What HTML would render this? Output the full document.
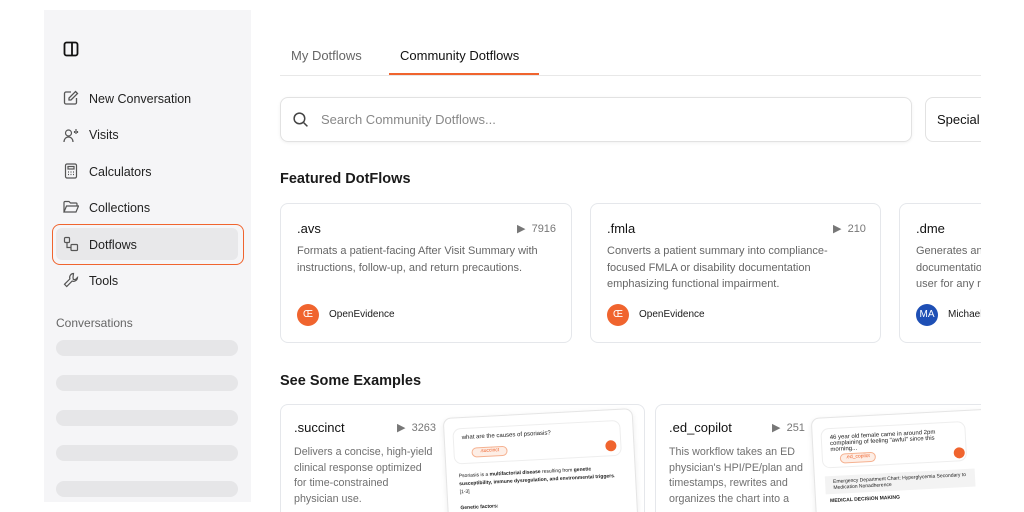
<!DOCTYPE html>
<html><head><style>
*{box-sizing:border-box;margin:0;padding:0}
body{width:1024px;height:512px;overflow:hidden;background:#fff;font-family:"Liberation Sans",sans-serif;position:relative;color:#1a1a1a}
.abs{position:absolute}
#sb{left:44px;top:10px;width:207px;height:492px;background:#f5f5f7}
.it{position:absolute;left:89px;font-size:12.5px;color:#222;line-height:14px}
.ic{position:absolute;left:63px;width:16px;height:16px}
.sk{position:absolute;left:56px;width:182px;height:16px;border-radius:8px;background:#e6e6e8}
.card{position:absolute;border:1px solid #e5e7eb;border-radius:8px;background:#fff;overflow:hidden}
.t{position:absolute;font-size:13px;color:#111}
.d{position:absolute;font-size:11px;color:#666;line-height:16.5px}
.cnt{position:absolute;font-size:11px;color:#777}
.av{position:absolute;width:22px;height:22px;border-radius:50%;background:#f0642e;color:#fff;font-size:10px;text-align:center;line-height:22px}
#clip{position:absolute;left:0;top:0;width:981px;height:512px;overflow:hidden}
</style></head><body>
<div id="sb" class="abs"></div>
<svg class="abs" style="left:63px;top:41px" width="16" height="16" viewBox="0 0 16 16" fill="none" stroke="#111" stroke-width="1.8"><rect x="1.5" y="1.5" width="13" height="13" rx="2"/><line x1="9" y1="2" x2="9" y2="14"/></svg>
<svg class="ic" style="top:90px" viewBox="0 0 16 16" fill="none" stroke="#555" stroke-width="1.3"><path d="M8 2H3a1.5 1.5 0 0 0-1.5 1.5v9A1.5 1.5 0 0 0 3 14h9a1.5 1.5 0 0 0 1.5-1.5V8"/><path d="M12.5 1.5l2 2L8 10H6V8z"/></svg>
<div class="it" style="top:92px">New Conversation</div>
<svg class="ic" style="top:127px" viewBox="0 0 16 16" fill="none" stroke="#555" stroke-width="1.2"><circle cx="5.5" cy="6" r="3"/><path d="M1 15c0-3 2-5 4.5-5s4.5 2 4.5 5"/><path d="M13 2v5M11.5 4v2M14.5 4v2"/></svg>
<div class="it" style="top:128px">Visits</div>
<svg class="ic" style="top:163px" viewBox="0 0 16 16" fill="none" stroke="#555" stroke-width="1.2"><rect x="2.5" y="1" width="11" height="14" rx="1.5"/><rect x="5" y="3.5" width="6" height="2.5"/><path d="M5 9h1M7.5 9h1M10 9h1M5 11.5h1M7.5 11.5h1M10 11.5h1"/></svg>
<div class="it" style="top:165px">Calculators</div>
<svg class="ic" style="top:199px" viewBox="0 0 16 16" fill="none" stroke="#555" stroke-width="1.2"><path d="M1 13V3.5A1 1 0 0 1 2 2.5h4l1.5 1.5H13a1 1 0 0 1 1 1V7"/><path d="M1 13l2.5-6h12L13 13z"/></svg>
<div class="it" style="top:201px">Collections</div>
<div class="abs" style="left:52px;top:224px;width:192px;height:41px;border:1.5px solid #f0642e;border-radius:8px"></div>
<div class="abs" style="left:56px;top:228px;width:182px;height:32px;background:#e8e8ea;border-radius:6px"></div>
<svg class="ic" style="top:236px" viewBox="0 0 16 16" fill="none" stroke="#555" stroke-width="1.2"><rect x="1.5" y="1.5" width="5" height="5" rx="1"/><rect x="8" y="8.5" width="6.5" height="6" rx="1"/><path d="M4 6.5V11.5H8"/></svg>
<div class="it" style="top:238px">Dotflows</div>
<svg class="ic" style="top:272px" viewBox="0 0 16 16" fill="none" stroke="#555" stroke-width="1.2"><path d="M10.5 1.5a4 4 0 0 0-3.6 5.4L1.5 12.3l2.2 2.2 5.4-5.4a4 4 0 0 0 5.4-3.6l-2.2 2.2-2-.3-.3-2z"/></svg>
<div class="it" style="top:274px">Tools</div>
<div class="abs" style="left:56px;top:316px;font-size:12px;color:#666">Conversations</div>
<div class="sk" style="top:340px"></div><div class="sk" style="top:375px"></div><div class="sk" style="top:410px"></div><div class="sk" style="top:445px"></div><div class="sk" style="top:481px"></div>

<div id="clip">
<div class="abs" style="left:291px;top:48px;font-size:13px;color:#666">My Dotflows</div>
<div class="abs" style="left:400px;top:48px;font-size:13px;color:#111">Community Dotflows</div>
<div class="abs" style="left:280px;top:75px;width:701px;height:1px;background:#e8e8e8"></div>
<div class="abs" style="left:389px;top:73px;width:150px;height:2px;background:#f0642e"></div>
<div class="abs" style="left:280px;top:97px;width:632px;height:45px;border:1px solid #e2e2e2;border-radius:8px;box-shadow:0 1px 3px rgba(0,0,0,.06)"></div>
<svg class="abs" style="left:292px;top:111px" width="17" height="17" viewBox="0 0 16 16" fill="none" stroke="#444" stroke-width="1.4"><circle cx="7" cy="7" r="5"/><path d="M11 11l3.5 3.5"/></svg>
<div class="abs" style="left:321px;top:112px;font-size:13px;color:#888">Search Community Dotflows...</div>
<div class="abs" style="left:925px;top:97px;width:80px;height:45px;border:1px solid #e2e2e2;border-radius:8px"></div>
<div class="abs" style="left:937px;top:112px;font-size:13px;color:#111">Special</div>

<div class="abs" style="left:280px;top:171px;font-size:14.5px;font-weight:bold">Featured DotFlows</div>
<div class="card" style="left:280px;top:203px;width:292px;height:140px">
<div class="t" style="left:16px;top:17px">.avs</div><div class="cnt" style="left:236px;top:18px">▶&nbsp; 7916</div>
<div class="d" style="left:16px;top:39px">Formats a patient-facing After Visit Summary with<br>instructions, follow-up, and return precautions.</div>
<div class="av" style="left:16px;top:100px">Œ</div><div class="abs" style="left:48px;top:105px;font-size:10px">OpenEvidence</div></div>
<div class="card" style="left:590px;top:203px;width:291px;height:140px">
<div class="t" style="left:16px;top:17px">.fmla</div><div class="cnt" style="left:242px;top:18px">▶&nbsp; 210</div>
<div class="d" style="left:16px;top:39px">Converts a patient summary into compliance-<br>focused FMLA or disability documentation<br>emphasizing functional impairment.</div>
<div class="av" style="left:16px;top:100px">Œ</div><div class="abs" style="left:48px;top:105px;font-size:10px">OpenEvidence</div></div>
<div class="card" style="left:899px;top:203px;width:200px;height:140px">
<div class="t" style="left:16px;top:17px">.dme</div>
<div class="d" style="left:16px;top:39px">Generates an order<br>documentation for<br>user for any r</div>
<div class="av" style="left:16px;top:100px;background:#1e4fb5">MA</div><div class="abs" style="left:48px;top:105px;font-size:10px">Michael</div></div>

<div class="abs" style="left:280px;top:373px;font-size:14.5px;font-weight:bold">See Some Examples</div>
<div class="card" style="left:280px;top:404px;width:365px;height:108px;border-bottom:none;border-radius:8px 8px 0 0">
<div class="t" style="left:13px;top:15px">.succinct</div><div class="cnt" style="left:116px;top:16px">▶&nbsp; 3263</div>
<div class="d" style="left:13px;top:40px;font-size:10.7px;line-height:15.5px;color:#707070">Delivers a concise, high-yield<br>clinical response optimized<br>for time-constrained<br>physician use.</div>
<div class="abs" style="left:165px;top:8px;width:190px;height:130px;border:1px solid #e5e5e5;border-radius:8px;transform:rotate(-3deg);box-shadow:0 2px 6px rgba(0,0,0,.08);background:#fff">
<div class="abs" style="left:8px;top:10px;width:168px;height:36px;border:1px solid #eee;border-radius:8px;font-size:6px;padding:6px 8px">what are the causes of psoriasis?</div>
<div class="abs" style="left:26px;top:30px;width:36px;height:10px;border:1px solid #f5b190;border-radius:5px;background:#fdeee6;font-size:5px;color:#f0642e;text-align:center">.succinct</div>
<div class="abs" style="left:160px;top:30px;width:11px;height:11px;border-radius:50%;background:#f0642e"></div>
<div class="abs" style="left:12px;top:54px;font-size:5px;width:160px;line-height:8px">Psoriasis is a <b>multifactorial disease</b> resulting from <b>genetic susceptibility, immune dysregulation, and environmental triggers</b>. [1-3]<br><br><b>Genetic factors:</b></div></div></div>
<div class="card" style="left:655px;top:404px;width:365px;height:108px;border-bottom:none;border-radius:8px 8px 0 0">
<div class="t" style="left:13px;top:15px">.ed_copilot</div><div class="cnt" style="left:116px;top:16px">▶&nbsp; 251</div>
<div class="d" style="left:13px;top:40px;font-size:10.7px;line-height:15.5px;color:#707070">This workflow takes an ED<br>physician's HPI/PE/plan and<br>timestamps, rewrites and<br>organizes the chart into a</div>
<div class="abs" style="left:158px;top:8px;width:190px;height:130px;border:1px solid #e5e5e5;border-radius:8px;transform:rotate(-3deg);box-shadow:0 2px 6px rgba(0,0,0,.08);background:#fff">
<div class="abs" style="left:8px;top:10px;width:145px;height:40px;border:1px solid #eee;border-radius:8px;font-size:6px;padding:6px 8px">46 year old female came in around 2pm complaining of feeling "awful" since this morning...</div>
<div class="abs" style="left:26px;top:36px;width:36px;height:10px;border:1px solid #f5b190;border-radius:5px;background:#fdeee6;font-size:5px;color:#f0642e;text-align:center">.ed_copilot</div>
<div class="abs" style="left:140px;top:36px;width:11px;height:11px;border-radius:50%;background:#f0642e"></div>
<div class="abs" style="left:10px;top:58px;width:150px;height:18px;background:#f3f3f3;font-size:5px;padding:3px 8px">Emergency Department Chart: Hyperglycemia Secondary to Medication Nonadherence</div>
<div class="abs" style="left:14px;top:80px;font-size:5px;font-weight:bold">MEDICAL DECISION MAKING</div></div></div>
</div>
</body></html>
